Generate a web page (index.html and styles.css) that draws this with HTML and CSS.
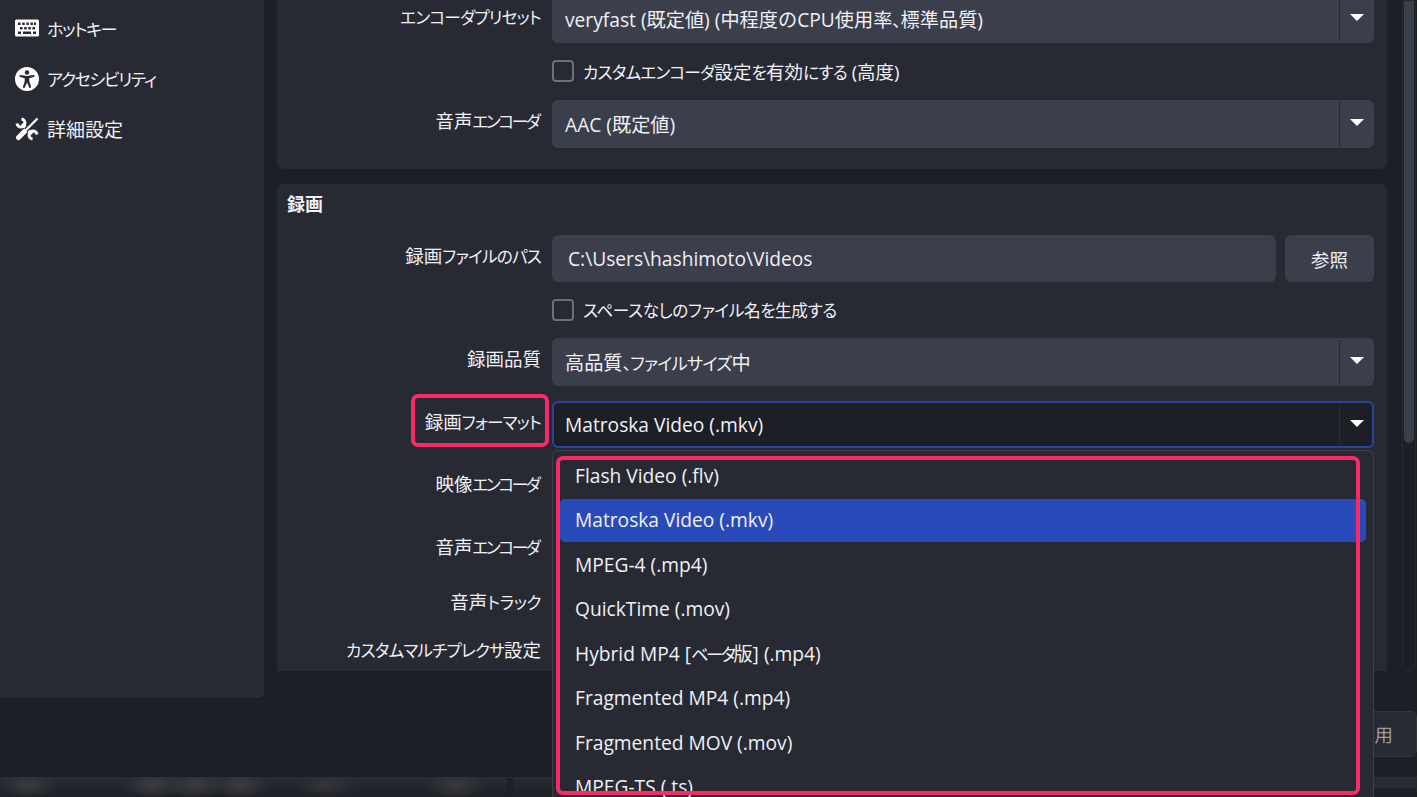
FILE: index.html
```html
<!DOCTYPE html>
<html lang="ja">
<head>
    <meta charset="UTF-8">
    <title>設定</title>
    <link rel="stylesheet" href="styles.css">
</head>
<body>
    <div class="window">
        <div class="top">
            <aside class="sidebar">
                <div class="nav-item">
                    <svg class="nav-icon" viewBox="0 0 24 24"><path fill="#fff" fill-rule="evenodd" d="M1.500 3.500h21a1.500 1.500 0 0 1 1.500 1.500v14a1.500 1.500 0 0 1-1.500 1.500h-21a1.500 1.500 0 0 1-1.500-1.500V5a1.500 1.500 0 0 1 1.500-1.500zM3 6.500v2.500h2.500V6.500zm4.200 0v2.500h2.500V6.500zm4.100 0v2.500h2.500V6.500zm4.100 0v2.500h2.500V6.500zm3.600 0v2.500H21V6.500zM5 11v2.500h2.500V11zm4.200 0v2.500h2.500V11zm4.100 0v2.500h2.500V11zm4.100 0v2.500H20V11zM3 15.500V18h3v-2.500zm5 0V18h8v-2.500zm10 0V18h3v-2.500z"/></svg>
                    <span class="kana">ホットキー</span>
                </div>
                <div class="nav-item">
                    <svg class="nav-icon" viewBox="0 0 24 24"><path fill="#fff" fill-rule="evenodd" d="M12 0a12 12 0 1 1 0 24a12 12 0 0 1 0-24zm0 3.200a2.300 2.300 0 1 0 0 4.600a2.300 2.300 0 0 0 0-4.600zM5.600 8a1 1 0 0 0-.3 2l4.400 1.200v3.300L8 19.600a1 1 0 0 0 1.900.7L12 15.400l2.100 4.900a1 1 0 0 0 1.900-.7l-1.700-5.100v-3.300L18.700 10a1 1 0 0 0-.3-2L12 9z"/></svg>
                    <span class="kana">アクセシビリティ</span>
                </div>
                <div class="nav-item">
                    <svg class="nav-icon" viewBox="0 0 24 24" fill="none" stroke="#fff">
                        <path stroke-width="3" d="M2 6.500A4 4 0 1 0 6.500 2"/>
                        <path stroke-width="3.600" d="M7 7l10 10"/>
                        <path stroke-width="3" d="M22 17.500A4 4 0 1 0 17.500 22"/>
                        <path stroke="#272a33" stroke-width="5" d="M17 7L7 17"/>
                        <path stroke-width="2.400" d="M22.500 1.500L11 13"/>
                        <path stroke-width="5" stroke-linecap="round" d="M9.500 14.500L3.500 20.500"/>
                    </svg>
                    <span>詳細設定</span>
                </div>
            </aside>

            <main class="settings">
                <section class="panel panel-stream">
                    <div class="row">
                        <label class="row-label row-label-first"><span class="kana">エンコーダプリセット</span></label>
                        <div class="select"><span>veryfast (既定値) (中程度のCPU使用率<span class="kana-wide">、</span>標準品質)</span><i class="select-arrow"></i></div>
                    </div>
                    <div class="check-row">
                        <span class="checkbox"></span>
                        <span><span class="kana">カスタムエンコーダ</span>設定<span class="kana">を</span>有効<span class="kana">にする</span> (高度)</span>
                    </div>
                    <div class="row">
                        <label class="row-label">音声<span class="kana-tight">エンコーダ</span></label>
                        <div class="select"><span>AAC (既定値)</span><i class="select-arrow"></i></div>
                    </div>
                </section>

                <section class="panel panel-record">
                    <h2 class="panel-title">録画</h2>
                    <div class="row">
                        <label class="row-label">録画<span class="kana">ファイルのパス</span></label>
                        <div class="path-input">C:\Users\hashimoto\Videos</div>
                        <button class="browse">参照</button>
                    </div>
                    <div class="check-row check-row-record">
                        <span class="checkbox"></span>
                        <span class="kana-wide">スペースなしのファイル名を生成する</span>
                    </div>
                    <div class="row">
                        <label class="row-label">録画品質</label>
                        <div class="select"><span>高品質<span class="kana">、ファイルサイズ</span>中</span><i class="select-arrow"></i></div>
                    </div>
                    <div class="row row-format">
                        <label class="row-label">録画<span class="kana">フォーマット</span></label>
                        <div class="select select-open"><span>Matroska Video (.mkv)</span><i class="select-arrow"></i></div>
                    </div>
                    <div class="row row-plain row-video"><label class="row-label">映像<span class="kana-tight">エンコーダ</span></label></div>
                    <div class="row row-plain row-audio"><label class="row-label">音声<span class="kana-tight">エンコーダ</span></label></div>
                    <div class="row row-plain row-track"><label class="row-label">音声<span class="kana-wide">トラック</span></label></div>
                    <div class="row row-plain row-mux"><label class="row-label"><span class="kana">カスタムマルチプレクサ</span>設定</label></div>
                </section>
            </main>

            <div class="scrollbar"><div class="scroll-thumb"></div></div>
        </div>

        <footer class="footer">
            <button class="apply">適用</button>
        </footer>
        <div class="blur-strip"></div>
    </div>

    <ul class="popup">
        <li>Flash Video (.flv)</li>
        <li class="current">Matroska Video (.mkv)</li>
        <li>MPEG-4 (.mp4)</li>
        <li>QuickTime (.mov)</li>
        <li>Hybrid MP4 [<span class="kana-tight">ベータ</span>版] (.mp4)</li>
        <li>Fragmented MP4 (.mp4)</li>
        <li>Fragmented MOV (.mov)</li>
        <li>MPEG-TS (.ts)</li>
    </ul>

    <div class="mark mark-label"></div>
    <div class="mark mark-list"></div>
    <div class="page-edge"></div>
</body>
</html>
```

FILE: styles.css
```css
html, body {
    margin: 0;
    padding: 0;
    height: 100%;
}

body {
    width: 1419px;
    height: 797px;
    position: relative;
    overflow: hidden;
    background-color: #1d1f27;
    color: #f0f0f5;
    font-family: "Open Sans", "Noto Sans CJK JP", sans-serif;
    font-size: 19.2px;
}

/* the reference uses a font with narrow kana */
.kana, .kana-tight, .kana-wide {
    font-size: 0.9em;
    font-feature-settings: "palt";
    letter-spacing: -0.8px;
}

.kana-tight {
    letter-spacing: -2.4px;
}

.kana-wide {
    letter-spacing: -0.4px;
}

.window {
    height: 797px;
    display: flex;
    flex-direction: column;
}

.top {
    height: 698px;
    display: flex;
    align-items: flex-start;
}

/* left column */
.sidebar {
    width: 264px;
    height: 698px;
    flex-shrink: 0;
    box-sizing: border-box;
    padding-top: 3px;
    background-color: #272a33;
    border-bottom-right-radius: 6px;
}

.nav-item {
    height: 50.500px;
    display: flex;
    align-items: center;
    gap: 8px;
    padding-left: 15px;
    font-size: 19px;
}

.nav-item .kana {
    letter-spacing: -1.4px;
}

.nav-icon {
    width: 24px;
    height: 24px;
    flex-shrink: 0;
}

/* settings */
.settings {
    width: 1110px;
    height: 671px;
    margin-left: 13px;
    overflow: hidden;
    flex-shrink: 0;
}

.panel {
    background-color: #272a33;
    border-radius: 6px;
    box-sizing: border-box;
    padding: 0 13px 0 0;
}

.panel-stream {
    height: 174px;
    margin-top: -5px;
    margin-bottom: 15px;
}

.panel-record {
    height: 520px;
    position: relative;
}

.panel-title {
    margin: 0;
    padding: 7px 0 0 10px;
    height: 51px;
    box-sizing: border-box;
    font-size: 18px;
    font-weight: 700;
    line-height: 26px;
}

.row {
    display: flex;
    gap: 11px;
}

.row-label {
    width: 264px;
    flex-shrink: 0;
    text-align: right;
    font-size: 18.500px;
    line-height: 42px;
    white-space: nowrap;
}

.row-label .kana-tight {
    margin-right: 2.4px;
}

.row-label-first {
    padding-top: 1px;
}

.select {
    flex: 1;
    height: 48px;
    box-sizing: border-box;
    display: flex;
    align-items: center;
    padding: 0 0 1px 13px;
    position: relative;
    background-color: #3b3e4b;
    border-radius: 6px;
    white-space: nowrap;
}

.select-arrow {
    position: absolute;
    right: 0;
    top: 2px;
    bottom: 2px;
    width: 34px;
    border-left: 1px solid #272a33;
}

.select-arrow::after {
    content: "";
    position: absolute;
    left: 10px;
    top: 17px;
    border-left: 7px solid transparent;
    border-right: 7px solid transparent;
    border-top: 7px solid #fff;
}

.select-open {
    height: 47px;
    background-color: #1d1f27;
    border: 2px solid #29449f;
    padding-left: 11px;
}

.select-open .select-arrow {
    right: -2px;
    top: 0;
    bottom: 0;
    border-left-color: #2b2d36;
}

.check-row {
    height: 57px;
    box-sizing: border-box;
    padding: 0 0 2px 275px;
    display: flex;
    align-items: center;
    gap: 9px;
    font-size: 18.500px;
}

.check-row-record {
    height: 56px;
    padding-bottom: 0;
}

.checkbox {
    width: 18px;
    height: 18px;
    border: 2px solid #6d6f7a;
    border-radius: 4px;
    flex-shrink: 0;
}

.path-input {
    width: 725px;
    height: 47px;
    box-sizing: border-box;
    padding-left: 16px;
    line-height: 47px;
    background-color: #3b3e4b;
    border-radius: 6px;
}

.browse {
    width: 89px;
    height: 47px;
    margin-left: -2px;
    border: none;
    border-radius: 6px;
    background-color: #3b3e4b;
    color: #f0f0f5;
    font-family: inherit;
    font-size: 18.500px;
}

.row-format {
    margin-top: 15px;
}

.row-plain {
    height: 40px;
}

.row-video { margin-top: 15px; }
.row-audio { margin-top: 23px; }
.row-track { margin-top: 15px; }
.row-mux { margin-top: 8px; }

/* scrollbar */
.scrollbar {
    width: 14px;
    height: 671px;
    margin-left: 15px;
    box-sizing: border-box;
    border: 1px solid #272a33;
    border-radius: 0 0 5px 5px;
    padding: 0 1px;
    flex-shrink: 0;
}

.scroll-thumb {
    height: 442px;
    background-color: #3b3e4b;
    border-radius: 0 0 5px 5px;
}

/* bottom */
.footer {
    height: 79px;
    display: flex;
    justify-content: flex-end;
    padding-right: 2px;
}

.apply {
    width: 110px;
    height: 46px;
    margin-top: 13px;
    border: 1px solid #33353f;
    border-radius: 6px;
    background-color: #272a33;
    color: #9b9da6;
    font-family: inherit;
    font-size: 18.500px;
    text-align: right;
    padding-right: 23px;
}

.blur-strip {
    height: 20px;
    background:
        linear-gradient(#1e2027, #1e2027) 507px 1px / 7px 19px no-repeat,
        radial-gradient(ellipse 30px 14px at 28px 8px, #3a3b40, transparent),
        radial-gradient(ellipse 30px 14px at 153px 8px, #3c3d42, transparent),
        radial-gradient(ellipse 30px 14px at 195px 8px, #3c3d42, transparent),
        radial-gradient(ellipse 30px 14px at 240px 8px, #3c3d42, transparent),
        radial-gradient(ellipse 30px 14px at 326px 8px, #34353a, transparent),
        radial-gradient(ellipse 30px 14px at 456px 8px, #3a3b40, transparent),
        linear-gradient(#292b31, #1e2027) left / 552px 100% no-repeat,
        linear-gradient(#2a2c35 55%, #1e2027 60%);
}

/* dropdown list, sits over the form */
.popup {
    position: absolute;
    left: 552px;
    top: 450px;
    width: 822px;
    height: 347px;
    margin: 0;
    padding: 3.500px 7px 0;
    box-sizing: border-box;
    overflow: hidden;
    list-style: none;
    background-color: #272a33;
    border: 1px solid #3b3e4b;
    border-bottom: none;
    border-radius: 6px 6px 0 0;
}

.popup li {
    height: 42.500px;
    margin-bottom: 2px;
    line-height: 42px;
    padding-left: 15px;
    border-radius: 5px;
    white-space: nowrap;
}

.popup .current {
    background-color: #284bb9;
}

/* pink annotation boxes */
.mark {
    position: absolute;
    border: 4px solid #f92b66;
    border-radius: 7px;
    box-sizing: border-box;
}

.mark-label {
    left: 411px;
    top: 394px;
    width: 138px;
    height: 53px;
}

.mark-list {
    left: 556px;
    top: 456px;
    width: 804px;
    height: 339px;
}

.page-edge {
    position: absolute;
    right: 0;
    top: 0;
    width: 2px;
    height: 797px;
    background-color: #fff;
}
```
